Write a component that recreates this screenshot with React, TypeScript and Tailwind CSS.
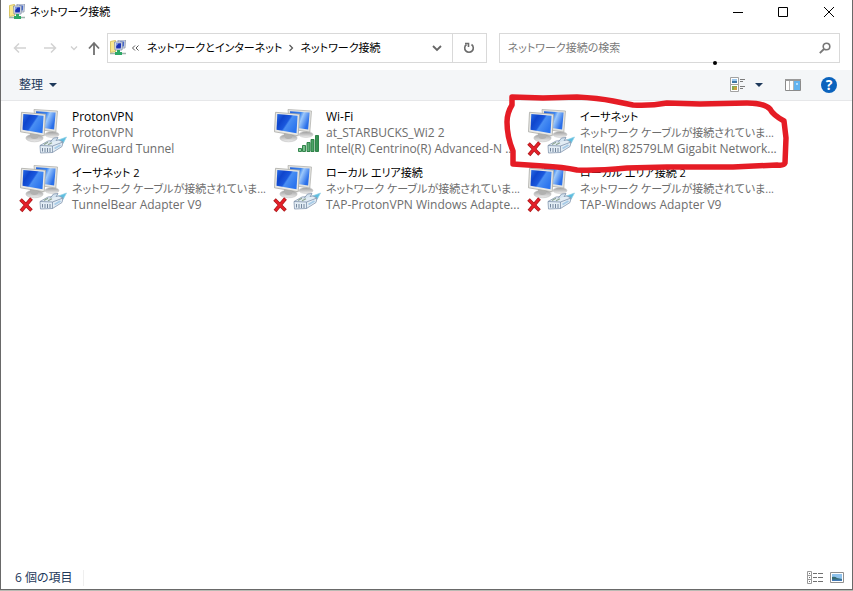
// App.tsx
import type { ReactNode } from "react";

type Status = "plugged" | "unplugged" | "wifi";

interface Connection {
  name: string;
  status: string;
  device: string;
  kind: Status;
}

const connections: Connection[] = [
  { name: "ProtonVPN", status: "ProtonVPN", device: "WireGuard Tunnel", kind: "plugged" },
  { name: "Wi-Fi", status: "at_STARBUCKS_Wi2 2", device: "Intel(R) Centrino(R) Advanced-N ...", kind: "wifi" },
  { name: "イーサネット", status: "ネットワーク ケーブルが接続されていま...", device: "Intel(R) 82579LM Gigabit Network...", kind: "unplugged" },
  { name: "イーサネット 2", status: "ネットワーク ケーブルが接続されていま...", device: "TunnelBear Adapter V9", kind: "unplugged" },
  { name: "ローカル エリア接続", status: "ネットワーク ケーブルが接続されていま...", device: "TAP-ProtonVPN Windows Adapte...", kind: "unplugged" },
  { name: "ローカル エリア接続 2", status: "ネットワーク ケーブルが接続されていま...", device: "TAP-Windows Adapter V9", kind: "unplugged" },
];

// Kana set a size smaller than Latin text, so both look even
const hasKana = (text: string) => /[\u3040-\u30ff]/.test(text);

// Shared gradients, referenced by id from every icon
function IconDefs() {
  return (
    <svg className="absolute size-0" aria-hidden="true">
      <defs>
        <linearGradient id="screen" x1="0" y1="0" x2="1" y2="0.6">
          <stop offset="0" stopColor="#2a6ee8" />
          <stop offset="0.3" stopColor="#0f45cc" />
          <stop offset="0.55" stopColor="#1a58dd" />
          <stop offset="0.62" stopColor="#4a8ff3" />
          <stop offset="1" stopColor="#2b74ee" />
        </linearGradient>
        <linearGradient id="screenBack" x1="0" y1="0" x2="1" y2="0.4">
          <stop offset="0" stopColor="#1d5fdc" />
          <stop offset="0.5" stopColor="#3f86ee" />
          <stop offset="0.65" stopColor="#9cc8fb" />
          <stop offset="1" stopColor="#2a6fe9" />
        </linearGradient>
        <linearGradient id="stand" x1="0" y1="0" x2="0" y2="1">
          <stop offset="0" stopColor="#9b9b9b" />
          <stop offset="1" stopColor="#eeeeee" />
        </linearGradient>
        <linearGradient id="bars" x1="0" y1="0" x2="1" y2="0">
          <stop offset="0" stopColor="#8fd0a0" />
          <stop offset="1" stopColor="#2f8d4d" />
        </linearGradient>
      </defs>
    </svg>
  );
}

function NetworkFolderIcon() {
  return (
    <svg className="size-4 shrink-0" viewBox="0 0 16 16" aria-hidden="true">
      <path d="M.5 1.5l5-1v11l-5 1z" fill="#f8e78f" stroke="#d9c565" />
      <path d="M8 0h7.5l-.5 8H8z" fill="#d5dbe8" stroke="#8d97ac" strokeWidth=".8" />
      <path d="M10 1.5h4.2l-.3 5H10z" fill="#4568cb" />
      <path d="M4.5 2h8l-.5 8h-7z" fill="#dfe4ee" stroke="#7e8aa4" strokeWidth=".8" />
      <path d="M6 3.3h5.2l-.4 5.2H6.2z" fill="#1a31b5" />
      <path d="M6 3.3h2.6l-2.4 3z" fill="#8eaaf0" />
      <path d="M7 10h3v2h2v3H5v-3h2z" fill="#2da866" />
      <path d="M0 13.5h5M12 13.5h4" stroke="#9eb5ac" strokeWidth="1.6" />
    </svg>
  );
}

function ConnectionIcon({ kind }: { kind: Status }) {
  return (
    <svg className="w-[52px] h-14 shrink-0" viewBox="0 0 52 56" aria-hidden="true">
      {/* back monitor */}
      <ellipse cx="36" cy="29.5" rx="7" ry="3" fill="url(#stand)" stroke="#c4c4c4" strokeWidth=".5" />
      <path d="M18 4.500l23.500 1.500-1.700 21-20-3z" fill="#e3e3e0" stroke="#b2b2ae" strokeWidth=".8" />
      <path d="M20 6.300l19.600 1.300-1.500 17-17-2.600z" fill="url(#screenBack)" />
      {/* front monitor */}
      <path d="M14 28h8l1 5h-9z" fill="#a5a5a5" />
      <ellipse cx="18.500" cy="33" rx="8.600" ry="3.800" fill="url(#stand)" stroke="#bdbdbd" strokeWidth=".6" />
      <path d="M14 28l8 2v3q-4 2-7 0z" fill="#b1b1b0" />
      <path d="M5.500 7.300L29.500 9.200 28.200 30.800 4.500 26.800z" fill="#e9e9e6" stroke="#a9a9a5" strokeWidth=".8" />
      <path d="M7.300 9L27.600 10.700 26.500 28.200 6.500 24.800z" fill="url(#screen)" />
      {kind === "wifi" ? (
        <g fill="url(#bars)" stroke="#247a40" strokeWidth=".9">
          <path d="M28.5 43.5h3v3h-3zM32.5 40.5h3v6h-3zM37 37.5h3v9h-3zM41 34.5h3v12h-3zM45.5 30.5h3v16h-3z" />
        </g>
      ) : (
        <g strokeLinejoin="round">
          <path d="M41 35.500l9.500-3.500-3.500 6.500-4 1z" fill="#5dbde0" stroke="#8ed0e5" strokeWidth=".7" />
          <path d="M24 40.500l8-4.500 11-1 4 2-1 4.500-9.500 6-12 .5z" fill="#e3edf5" stroke="#8497ae" strokeWidth=".8" />
          <path d="M24 40.500l12.500.5 10.500-4M36.500 41v6.500" fill="none" stroke="#7e91a9" strokeWidth=".8" />
          <path d="M34 37.500l3.500-4.500 4.500-.5-2 3.500" fill="#d5e4f0" stroke="#7e91a9" strokeWidth=".8" />
          <path d="M26.500 43v3.500M29 43v4M31.500 43v4M34 43v4" stroke="#75879d" />
          <path d="M28 39.500l4-2.200M32 39.700l4-2" stroke="#8da491" strokeWidth="1.200" />
          <path d="M38.500 43.500l6-3.500" stroke="#a7cbe7" strokeWidth="2" />
        </g>
      )}
      {kind === "unplugged" && (
        <g>
          <path d="M4.500 38.500l11 11M15.500 37.500l-10.500 12.500" stroke="#a91a1a" strokeWidth="3.600" />
          <path d="M5 39l10 10M15 38l-9.500 11.500" stroke="#e5202a" strokeWidth="2.300" />
        </g>
      )}
    </svg>
  );
}

function IconButton({ label, className, children }: { label: string; className: string; children: ReactNode }) {
  return (
    <button type="button" aria-label={label} className={`flex items-center justify-center ${className}`}>
      {children}
    </button>
  );
}

function TitleBar() {
  return (
    <header className="flex h-6 items-center pl-2">
      <NetworkFolderIcon />
      <h1 className="ml-[5px] flex-1 text-[11px] text-black">ネットワーク接続</h1>
      <IconButton label="最小化" className="h-6 w-11">
        <svg className="size-3" viewBox="0 0 12 12" stroke="#000" fill="none"><path d="M1 6.500h10" /></svg>
      </IconButton>
      <IconButton label="最大化" className="h-6 w-[46px]">
        <svg className="size-3" viewBox="0 0 12 12" stroke="#000" fill="none"><path d="M1.500 1.500h9v9h-9z" /></svg>
      </IconButton>
      <IconButton label="閉じる" className="h-6 w-[46px]">
        <svg className="size-3" viewBox="0 0 12 12" stroke="#000" fill="none"><path d="M1 1l10 10M11 1L1 11" /></svg>
      </IconButton>
    </header>
  );
}

function AddressRow() {
  return (
    <div className="flex items-center pt-[9px] pr-3 pb-[7px]">
      <nav className="flex w-[106px] shrink-0 items-center pl-[11px]" aria-label="移動">
        <IconButton label="戻る" className="size-4">
          <svg className="size-4" viewBox="0 0 16 16" stroke="#d2d2d2" strokeWidth="1.500" fill="none"><path d="M14 8H3M7 3.500L2.500 8 7 12.500" /></svg>
        </IconButton>
        <IconButton label="進む" className="ml-3.5 size-4">
          <svg className="size-4" viewBox="0 0 16 16" stroke="#d2d2d2" strokeWidth="1.500" fill="none"><path d="M2 8h11M9 3.500L13.500 8 9 12.500" /></svg>
        </IconButton>
        <IconButton label="最近表示した場所" className="ml-2 size-4">
          <svg className="size-2" viewBox="0 0 8 8" stroke="#d0d0d0" strokeWidth="1.300" fill="none"><path d="M1 2.500l3 3 3-3" /></svg>
        </IconButton>
        <IconButton label="上へ" className="ml-1 size-4">
          <svg className="size-4" viewBox="0 0 16 16" stroke="#707070" strokeWidth="1.800" fill="none"><path d="M8 15V3.500M3 8.500l5-5.500 5 5.500" /></svg>
        </IconButton>
      </nav>

      <div className="flex h-[30px] min-w-0 flex-[17] items-center border border-[#d9d9d9] pl-0.5 text-[11px]">
        <NetworkFolderIcon />
        <svg className="ml-[5px] size-2 shrink-0" viewBox="0 0 8 8" stroke="#555" fill="none"><path d="M4 1.500L1.500 4 4 6.500M7.500 1.500L5 4l2.500 2.500" /></svg>
        <a href="#internet" className="ml-2 truncate text-black">ネットワークとインターネット</a>
        <svg className="mx-[5px] size-2 shrink-0" viewBox="0 0 8 8" stroke="#555" strokeWidth="1.200" fill="none"><path d="M2.500 1l3 3-3 3" /></svg>
        <a href="#connections" className="flex-1 truncate text-black">ネットワーク接続</a>
        <IconButton label="以前の場所" className="w-[30px] self-stretch">
          <svg className="size-2.5" viewBox="0 0 10 10" stroke="#666" strokeWidth="1.800" fill="none"><path d="M1 3l4 4 4-4" /></svg>
        </IconButton>
        <IconButton label="最新の情報に更新" className="w-[34px] self-stretch border-l border-[#d9d9d9]">
          <svg className="size-3" viewBox="0 0 12 12" stroke="#6c6c6c" strokeWidth="1.600" fill="none">
            <path d="M8.500 2.500a4.300 4.300 0 1 1-5 0" />
            <path d="M2 1.500h3.500V5" />
          </svg>
        </IconButton>
      </div>

      <div className="ml-3 flex h-[30px] min-w-0 flex-[15] items-center border border-[#d9d9d9] pl-2 text-[11px]">
        <input
          type="search"
          aria-label="ネットワーク接続の検索"
          placeholder="ネットワーク接続の検索"
          className="min-w-0 flex-1 bg-transparent outline-none placeholder:text-[#7a7a7a]"
        />
        <IconButton label="検索" className="w-7 self-stretch">
          <svg className="size-3" viewBox="0 0 12 12" stroke="#777" fill="none">
            <circle cx="7.500" cy="4.500" r="3.300" strokeWidth="1.600" />
            <path d="M5 7L.8 11.200" strokeWidth="1.800" />
          </svg>
        </IconButton>
      </div>
    </div>
  );
}

function CommandBar() {
  return (
    <div className="flex h-[31px] items-center border-b border-[#e6e7e9] bg-[#f4f6f8] pr-[15px] pl-[18px] text-[#1e395b]">
      <button type="button" className="flex items-center gap-1.5">
        整理
        <svg className="h-1 w-2" viewBox="0 0 8 4" fill="#1e395b"><path d="M0 0h8L4 4z" /></svg>
      </button>
      <div className="flex-1" />
      <IconButton label="表示方法の変更" className="size-4">
        <svg className="size-4" viewBox="0 0 16 16" fill="none">
          <path d="M.5.5h8v7h-8zM.5 7.500h8v7h-8z" fill="#fff" stroke="#a2a2a2" />
          <path d="M2 2h5v2H2z" fill="#9cc8ef" />
          <path d="M2 4h5v2H2z" fill="#3e77a7" />
          <path d="M2 9h5v4H2z" fill="#87a951" />
          <path d="M4 10h3v3H4z" fill="#c99e42" />
          <path d="M10 2.500h5M10 4.500h3M10 9.500h5M10 11.500h3" stroke="#7c7c7c" />
        </svg>
      </IconButton>
      <IconButton label="その他のオプション" className="ml-1.5 h-4 w-[14px]">
        <svg className="h-1 w-2" viewBox="0 0 8 4" fill="#1e395b"><path d="M0 0h8L4 4z" /></svg>
      </IconButton>
      <IconButton label="プレビュー ウィンドウ" className="ml-[19px] size-4">
        <svg className="size-4" viewBox="0 0 16 16" fill="none">
          <path d="M.5 2.500h15v11H.5z" fill="#fff" stroke="#8b8b8b" />
          <path d="M0 2h16v2H0z" fill="#9a9a9a" />
          <path d="M4.500 4v9M8.500 4v9" stroke="#b5b5b5" />
          <path d="M9 4h6v9H9z" fill="#62b3ef" />
          <path d="M11 6h2v2h-2z" fill="#b6ddf9" />
        </svg>
      </IconButton>
      <IconButton label="ヘルプ" className="ml-5 size-4 rounded-full bg-[#0b63bd] text-sm font-bold text-white">
        ?
      </IconButton>
    </div>
  );
}

function Line({ text }: { text: string }) {
  return <p className={hasKana(text) ? "whitespace-nowrap text-[11px]/4" : "whitespace-nowrap"}>{text}</p>;
}

function ConnectionItem({ item }: { item: Connection }) {
  return (
    <li className="flex h-14">
      <ConnectionIcon kind={item.kind} />
      <div className="min-w-0 pt-1 pl-1 text-[#6d6d6d]">
        <div className="text-black">
          <Line text={item.name} />
        </div>
        <Line text={item.status} />
        <Line text={item.device} />
      </div>
    </li>
  );
}

// Red pen outline around the wired adapter, plus a stray ink dot
function PenMarks() {
  return (
    <svg className="pointer-events-none absolute top-0 left-0 h-[180px] w-[800px]" viewBox="0 0 800 180" aria-hidden="true">
      <path
        d="M512 97L543 98 577 97Q598 98 613 101L633 105Q650 106 667 103L700 104 747 103Q764 103 770 109Q773 115 784 121L786 138 785 163Q784 166 777 165L733 167 667 167 627 168Q595 171 577 170Q563 167 543 166L513 164 513 151Q507 137 507 122Q507 113 512 105Z"
        fill="none"
        stroke="#e51c25"
        strokeWidth="5.500"
        strokeLinejoin="round"
      />
      <circle cx="715" cy="63" r="2" fill="#000" />
    </svg>
  );
}

function StatusBar() {
  return (
    <footer className="flex h-6 items-center pt-0.5 pr-[7px] pl-3.5 text-[#1e395b]">
      <span className="border-r border-[#efefef] pr-2.5">6 個の項目</span>
      <div className="flex-1" />
      <IconButton label="詳細" className="size-4">
        <svg className="size-4" viewBox="0 0 16 16" fill="none">
          <path d="M.5 1.500h4v4h-4zM.5 5.500h4v4h-4zM.5 9.500h4v4h-4z" stroke="#999" />
          <path d="M2 3.500h1M2 7.500h1M2 11.500h1M6 3.500h4M11 3.500h5M6 7.500h4M11 7.500h5M6 11.500h4M11 11.500h5" stroke="#707070" />
        </svg>
      </IconButton>
      <IconButton label="大アイコン" className="ml-1.5 size-4">
        <svg className="size-4" viewBox="0 0 16 16" fill="none">
          <path d="M1.500 2.500h13v10h-13z" fill="#fff" stroke="#8f8f8f" />
          <path d="M3 4h10v7H3z" fill="#8fc2ec" />
          <path d="M3 7q3-1 5 1l5 1v2H3z" fill="#356b72" />
          <path d="M3 9.500h10V11H3z" fill="#4279b5" />
        </svg>
      </IconButton>
    </footer>
  );
}

export default function App() {
  return (
    <div className="relative flex min-h-screen flex-col bg-[#b9bab3] pb-px font-['Open_Sans','Noto_Sans_CJK_JP',sans-serif] text-xs leading-4 [font-feature-settings:'palt','kern']">
      <IconDefs />
      <div className="flex flex-1 flex-col border-x border-b border-[#696969] bg-white">
        <TitleBar />
        <AddressRow />
        <CommandBar />
        <main className="flex-1 px-[15px] pt-1">
          <ul className="grid grid-cols-[repeat(auto-fill,254px)]">
            {connections.map((item) => (
              <ConnectionItem key={item.name} item={item} />
            ))}
          </ul>
        </main>
        <StatusBar />
      </div>
      <PenMarks />
    </div>
  );
}
